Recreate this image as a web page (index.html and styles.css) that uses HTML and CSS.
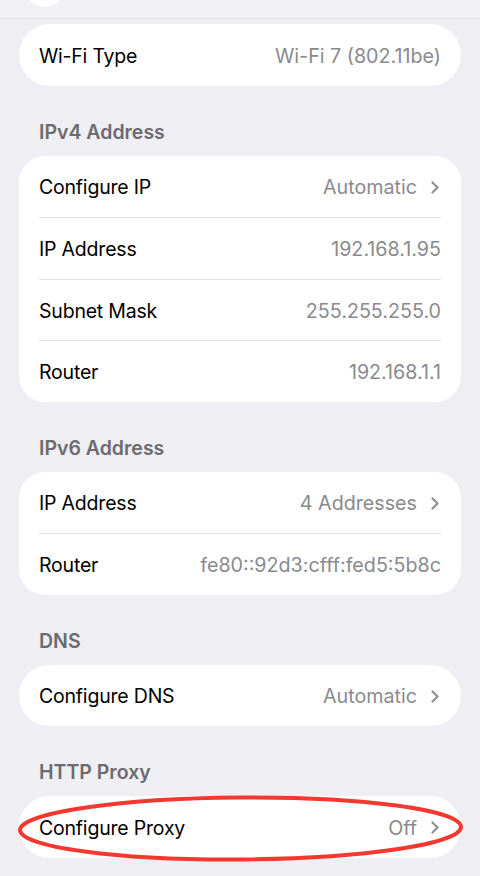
FILE: index.html
```html
<!DOCTYPE html>
<html>
<head>
<meta charset="utf-8">
<link rel="stylesheet" href="styles.css">
</head>
<body>
<div class="topbar"><div class="circle-btn"></div></div>
<main class="content">
  <section class="card pill">
    <div class="row"><span class="label">Wi-Fi Type</span><span class="value">Wi-Fi 7 (802.11be)</span></div>
  </section>

  <h2 class="header">IPv4 Address</h2>
  <section class="card">
    <div class="row"><span class="label">Configure IP</span><span class="value">Automatic<svg class="chev" viewBox="0 0 8 13"><path d="M1.5 1.5 L6.5 6.5 L1.5 11.5"/></svg></span></div>
    <div class="row"><span class="label">IP Address</span><span class="value">192.168.1.95</span></div>
    <div class="row"><span class="label">Subnet Mask</span><span class="value">255.255.255.0</span></div>
    <div class="row"><span class="label">Router</span><span class="value">192.168.1.1</span></div>
  </section>

  <h2 class="header">IPv6 Address</h2>
  <section class="card">
    <div class="row"><span class="label">IP Address</span><span class="value">4 Addresses<svg class="chev" viewBox="0 0 8 13"><path d="M1.5 1.5 L6.5 6.5 L1.5 11.5"/></svg></span></div>
    <div class="row"><span class="label">Router</span><span class="value">fe80::92d3:cfff:fed5:5b8c</span></div>
  </section>

  <h2 class="header">DNS</h2>
  <section class="card pill">
    <div class="row"><span class="label">Configure DNS</span><span class="value">Automatic<svg class="chev" viewBox="0 0 8 13"><path d="M1.5 1.5 L6.5 6.5 L1.5 11.5"/></svg></span></div>
  </section>

  <h2 class="header">HTTP Proxy</h2>
  <section class="card pill">
    <div class="row"><span class="label">Configure Proxy</span><span class="value">Off<svg class="chev" viewBox="0 0 8 13"><path d="M1.5 1.5 L6.5 6.5 L1.5 11.5"/></svg></span></div>
    <svg class="ring" viewBox="0 0 445 66"><ellipse cx="222.5" cy="33.5" rx="220.5" ry="31" transform="rotate(-0.4 222.5 33.5)"/></svg>
  </section>
</main>
</body>
</html>
```
FILE: styles.css
```css
* { box-sizing: border-box; }
html, body { margin: 0; padding: 0; }
body {
  width: 480px;
  height: 876px;
  overflow: hidden;
  background: #efeef3;
  font-family: Inter, "Liberation Sans", Arial, sans-serif;
  -webkit-font-smoothing: antialiased;
}
.topbar {
  height: 19px;
  background: #f1f1f5;
  border-bottom: 1px solid #e2e2e7;
  position: relative;
  overflow: hidden;
}
.circle-btn {
  position: absolute;
  left: 26px;
  top: -31px;
  width: 38px;
  height: 38px;
  border-radius: 50%;
  background: #ffffff;
}
.content {
  padding: 5px 19px 0 19px;
  display: flex;
  flex-direction: column;
}
.card {
  background: #ffffff;
  border-radius: 26px;
  padding: 0 20px;
  display: flex;
  flex-direction: column;
  position: relative;
}
.card.pill { border-radius: 31px; }
.row {
  height: 61.5px;
  display: flex;
  align-items: center;
  justify-content: space-between;
  font-size: 19.5px;
  padding-top: 2px;
}
.row + .row { border-top: 1px solid #e4e4e8; }
.label { color: #000000; letter-spacing: -0.2px; }
.value {
  color: #8a8a8e;
  display: flex;
  align-items: center;
  font-size: 19.7px;
  letter-spacing: 0;
}
.chev {
  width: 8px;
  height: 13px;
  margin-left: 14px;
  margin-right: 2px;
  fill: none;
  stroke: #8e8e93;
  stroke-width: 2.2;
  stroke-linecap: round;
  stroke-linejoin: round;
}
.header {
  margin: 0;
  padding: 34px 20px 12px 20px;
  font-size: 19.5px;
  font-weight: 600;
  color: #6b6b70;
  letter-spacing: 0;
  line-height: 24px;
}
.ring {
  position: absolute;
  left: -1px;
  top: -1px;
  width: 445px;
  height: 66px;
  fill: none;
  stroke: #f5382f;
  stroke-width: 4;
  overflow: visible;
}
```
